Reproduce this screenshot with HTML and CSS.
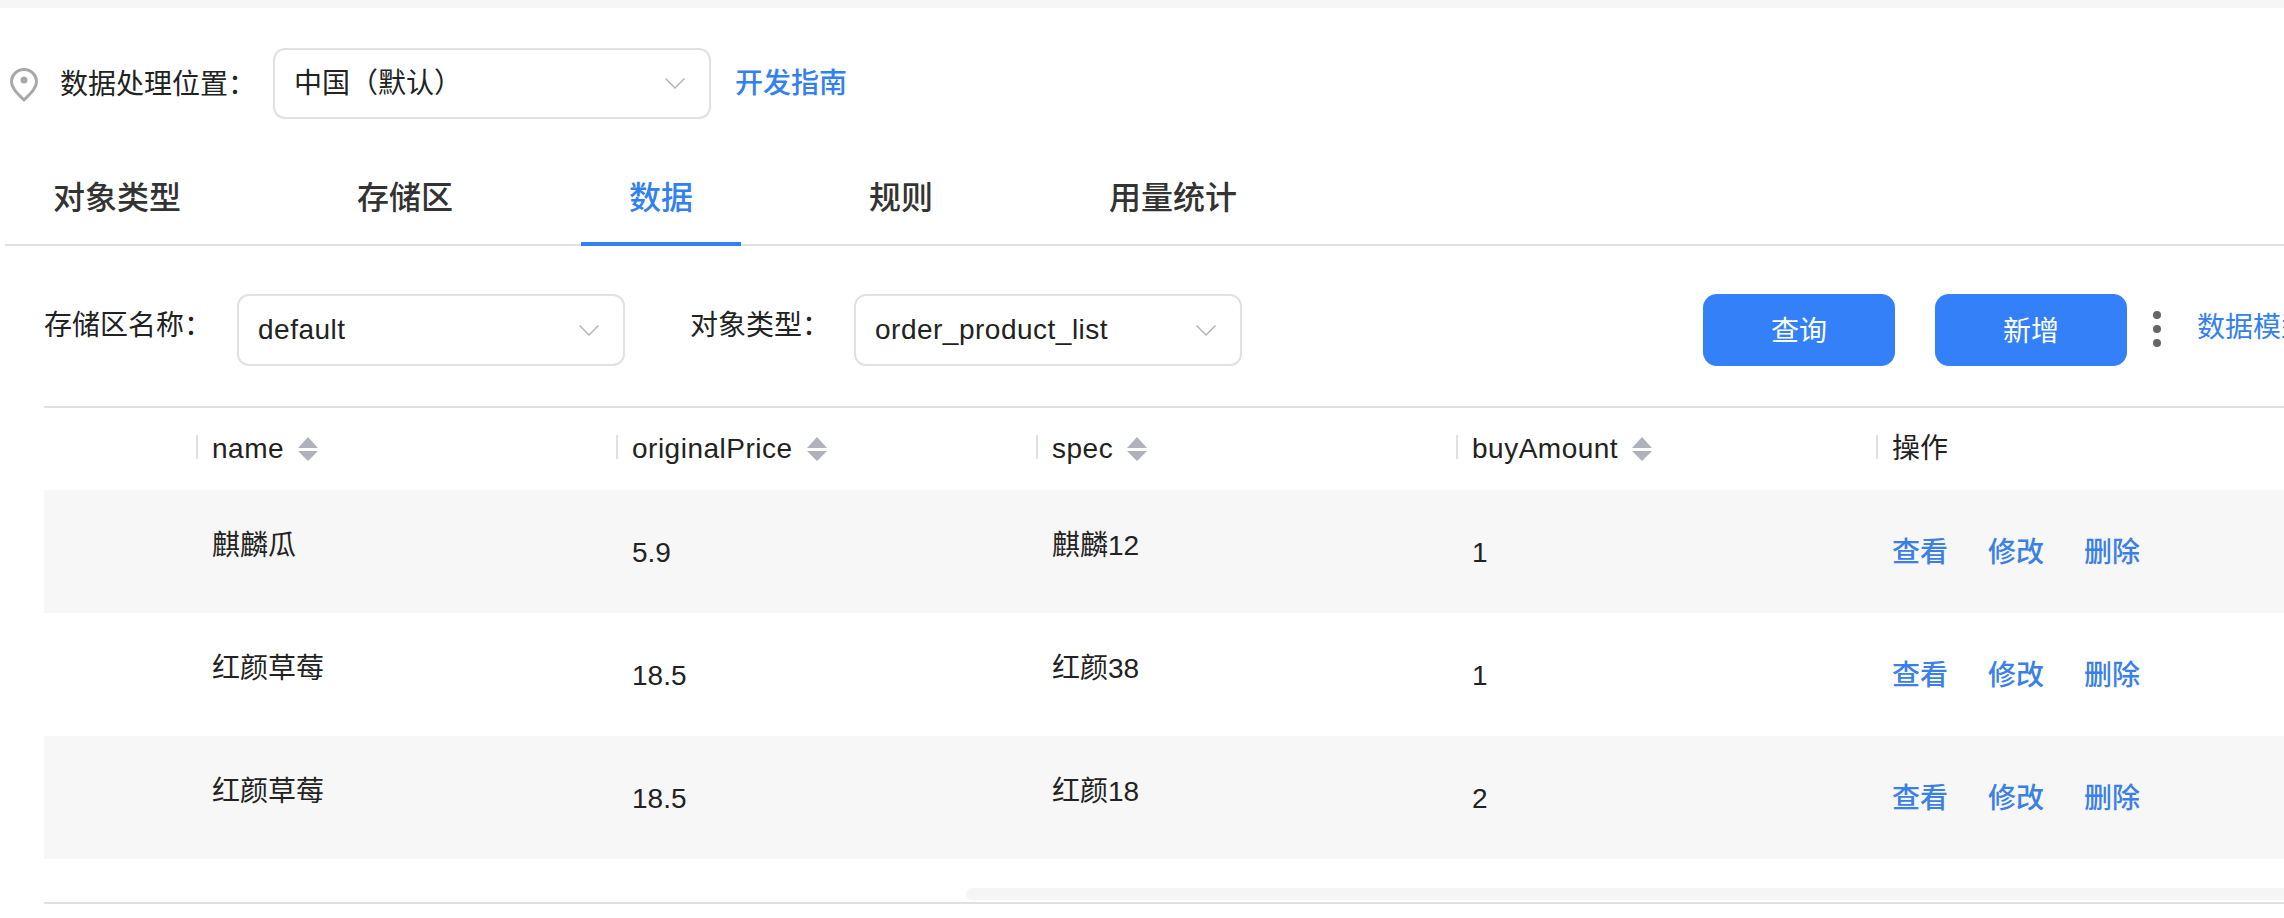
FILE: index.html
```html
<!DOCTYPE html>
<html lang="zh-CN">

<head>
    <meta charset="UTF-8">
    <title>数据</title>
    <link rel="stylesheet" href="styles.css">
</head>

<body>
    <div class="top-band"></div>

    <div class="location">
        <svg class="pin" width="28" height="34" viewBox="0 0 28 34">
            <path d="M14 32 C8 26 1.5 20.500 1.500 14 A12.500 12.500 0 0 1 26.500 14 C26.500 20.500 20 26 14 32Z" fill="none" stroke="#a8a8a8" stroke-width="3" stroke-linejoin="round" />
            <circle cx="14" cy="12" r="3.500" fill="#a8a8a8" />
        </svg>
        <span class="label location-label">数据处理位置：</span>
        <div class="select select-location">
            <span>中国（默认）</span>
            <svg class="chevron" width="20" height="11" viewBox="0 0 20 11"><path d="M0.500 0.500 L10 10 L19.500 0.500" /></svg>
        </div>
        <a class="guide">开发指南</a>
    </div>

    <nav class="tabs">
        <a class="tab">对象类型</a>
        <a class="tab">存储区</a>
        <a class="tab valgt">数据</a>
        <a class="tab">规则</a>
        <a class="tab">用量统计</a>
    </nav>

    <div class="toolbar">
        <span class="label bucket-label">存储区名称：</span>
        <div class="select select-bucket">
            <span class="latin">default</span>
            <svg class="chevron" width="20" height="11" viewBox="0 0 20 11"><path d="M0.500 0.500 L10 10 L19.500 0.500" /></svg>
        </div>
        <span class="label type-label">对象类型：</span>
        <div class="select select-type">
            <span class="latin">order_product_list</span>
            <svg class="chevron" width="20" height="11" viewBox="0 0 20 11"><path d="M0.500 0.500 L10 10 L19.500 0.500" /></svg>
        </div>
        <button class="btn btn-query">查询</button>
        <button class="btn btn-add">新增</button>
        <div class="more"><i></i><i></i><i></i></div>
        <a class="model-link">数据模型</a>
    </div>

    <section class="table">
        <div class="row head">
            <div></div>
            <div class="th"><span class="latin">name</span>
                <svg class="sort" width="20" height="24" viewBox="0 0 20 24"><path d="M10 0 L20 11 L0 11Z M0 14 L20 14 L10 24Z" /></svg>
            </div>
            <div class="th"><span class="latin">originalPrice</span>
                <svg class="sort" width="20" height="24" viewBox="0 0 20 24"><path d="M10 0 L20 11 L0 11Z M0 14 L20 14 L10 24Z" /></svg>
            </div>
            <div class="th"><span class="latin">spec</span>
                <svg class="sort" width="20" height="24" viewBox="0 0 20 24"><path d="M10 0 L20 11 L0 11Z M0 14 L20 14 L10 24Z" /></svg>
            </div>
            <div class="th"><span class="latin">buyAmount</span>
                <svg class="sort" width="20" height="24" viewBox="0 0 20 24"><path d="M10 0 L20 11 L0 11Z M0 14 L20 14 L10 24Z" /></svg>
            </div>
            <div class="th"><span>操作</span></div>
        </div>

        <div class="row data">
            <div></div>
            <div class="td raised">麒麟瓜</div>
            <div class="td">5.9</div>
            <div class="td raised">麒麟12</div>
            <div class="td">1</div>
            <div class="td actions"><a>查看</a><a>修改</a><a>删除</a></div>
        </div>
        <div class="row data">
            <div></div>
            <div class="td raised">红颜草莓</div>
            <div class="td">18.5</div>
            <div class="td raised">红颜38</div>
            <div class="td">1</div>
            <div class="td actions"><a>查看</a><a>修改</a><a>删除</a></div>
        </div>
        <div class="row data">
            <div></div>
            <div class="td raised">红颜草莓</div>
            <div class="td">18.5</div>
            <div class="td raised">红颜18</div>
            <div class="td">2</div>
            <div class="td actions"><a>查看</a><a>修改</a><a>删除</a></div>
        </div>

        <div class="scrollbar"></div>
    </section>
</body>

</html>
```

FILE: styles.css
```css
html,
body {
    margin: 0;
    height: 100%;
    overflow: hidden;
    background: #fff;
}

body {
    font-family: "Liberation Sans", "Noto Sans CJK SC", sans-serif;
    font-size: 28px;
    line-height: 40px;
    color: #222;
}

.top-band {
    height: 8px;
    background: #f6f6f6;
}

.location {
    display: flex;
    align-items: center;
    height: 71px;
    margin-top: 40px;
    padding-left: 10px;
}

.pin {
    flex-shrink: 0;
    margin-top: 2px;
}

.location-label {
    width: 213px;
    margin-left: 22px;
    margin-top: 2px;
}

.label {
    flex-shrink: 0;
    white-space: nowrap;
}

.select {
    box-sizing: border-box;
    flex-shrink: 0;
    display: flex;
    align-items: center;
    justify-content: space-between;
    height: 72px;
    padding: 0 24px 0 19px;
    border: 2px solid #e0e1e5;
    border-radius: 12px;
    white-space: nowrap;
}

.select-location {
    width: 438px;
    height: 71px;
}

.chevron path {
    fill: none;
    stroke: #b4b6bd;
    stroke-width: 1.500;
}

.guide {
    margin-left: 24px;
    color: #3380ef;
    font-weight: 500;
}

.tabs {
    display: flex;
    gap: 80px;
    height: 127px;
    box-sizing: border-box;
    margin-left: 5px;
    border-bottom: 2px solid #e0e0e0;
}

.tab {
    height: 127px;
    box-sizing: border-box;
    padding: 57px 48px 0;
    font-size: 32px;
    line-height: 44px;
    font-weight: 500;
    color: #333;
}

.tab.valgt {
    color: #3380ef;
    border-bottom: 4px solid #3380f5;
}

.toolbar {
    display: flex;
    align-items: center;
    height: 72px;
    margin-top: 48px;
    padding-left: 44px;
    white-space: nowrap;
}

.latin {
    letter-spacing: 0.500px;
}

.bucket-label,
.type-label {
    margin-bottom: 8px;
}

.bucket-label {
    width: 193px;
}

.select-bucket {
    width: 388px;
}

.type-label {
    margin-left: 65px;
    width: 164px;
}

.select-type {
    width: 388px;
}

.btn {
    flex-shrink: 0;
    width: 192px;
    height: 72px;
    padding: 3px 0 0;
    border: 0;
    border-radius: 14px;
    background: #3380f9;
    color: #fff;
    font: inherit;
}

.btn-query {
    margin-left: 461px;
}

.btn-add {
    margin-left: 40px;
}

.more {
    flex-shrink: 0;
    display: flex;
    flex-direction: column;
    gap: 6px;
    margin-left: 26px;
    margin-bottom: 2px;
}

.more i {
    width: 8px;
    height: 8px;
    border-radius: 50%;
    background: #666;
}

.model-link {
    flex-shrink: 0;
    margin-left: 36px;
    margin-bottom: 4px;
    color: #3380ef;
}

.table {
    margin: 40px 0 0 44px;
    border-top: 2px solid #e0e0e0;
    border-bottom: 2px solid #e0e0e0;
}

.row {
    display: grid;
    grid-template-columns: 152px repeat(4, 420px) 1fr;
    align-items: center;
}

.head {
    height: 82px;
}

.data {
    height: 123px;
}

.data:nth-child(even) {
    background: #f7f7f7;
}

.th {
    display: flex;
    align-items: center;
    height: 24px;
    padding-left: 14px;
    border-left: 2px solid #e0e0e0;
    margin-top: -4px;
    white-space: nowrap;
}

.th > span {
    margin-top: 4px;
}

.sort {
    margin-left: 14px;
    margin-top: 4px;
}

.sort path {
    fill: #b0b2bb;
}

.td {
    padding-left: 16px;
    padding-top: 2px;
}

.td.raised {
    padding-top: 0;
    padding-bottom: 12px;
}

.actions {
    display: flex;
    gap: 40px;
}

.actions a {
    color: #3a80e6;
    font-weight: 500;
}

.scrollbar {
    height: 12px;
    margin: 29px 0 2px 922px;
    border-radius: 6px 0 0 6px;
    background: #f5f5f7;
}
```
